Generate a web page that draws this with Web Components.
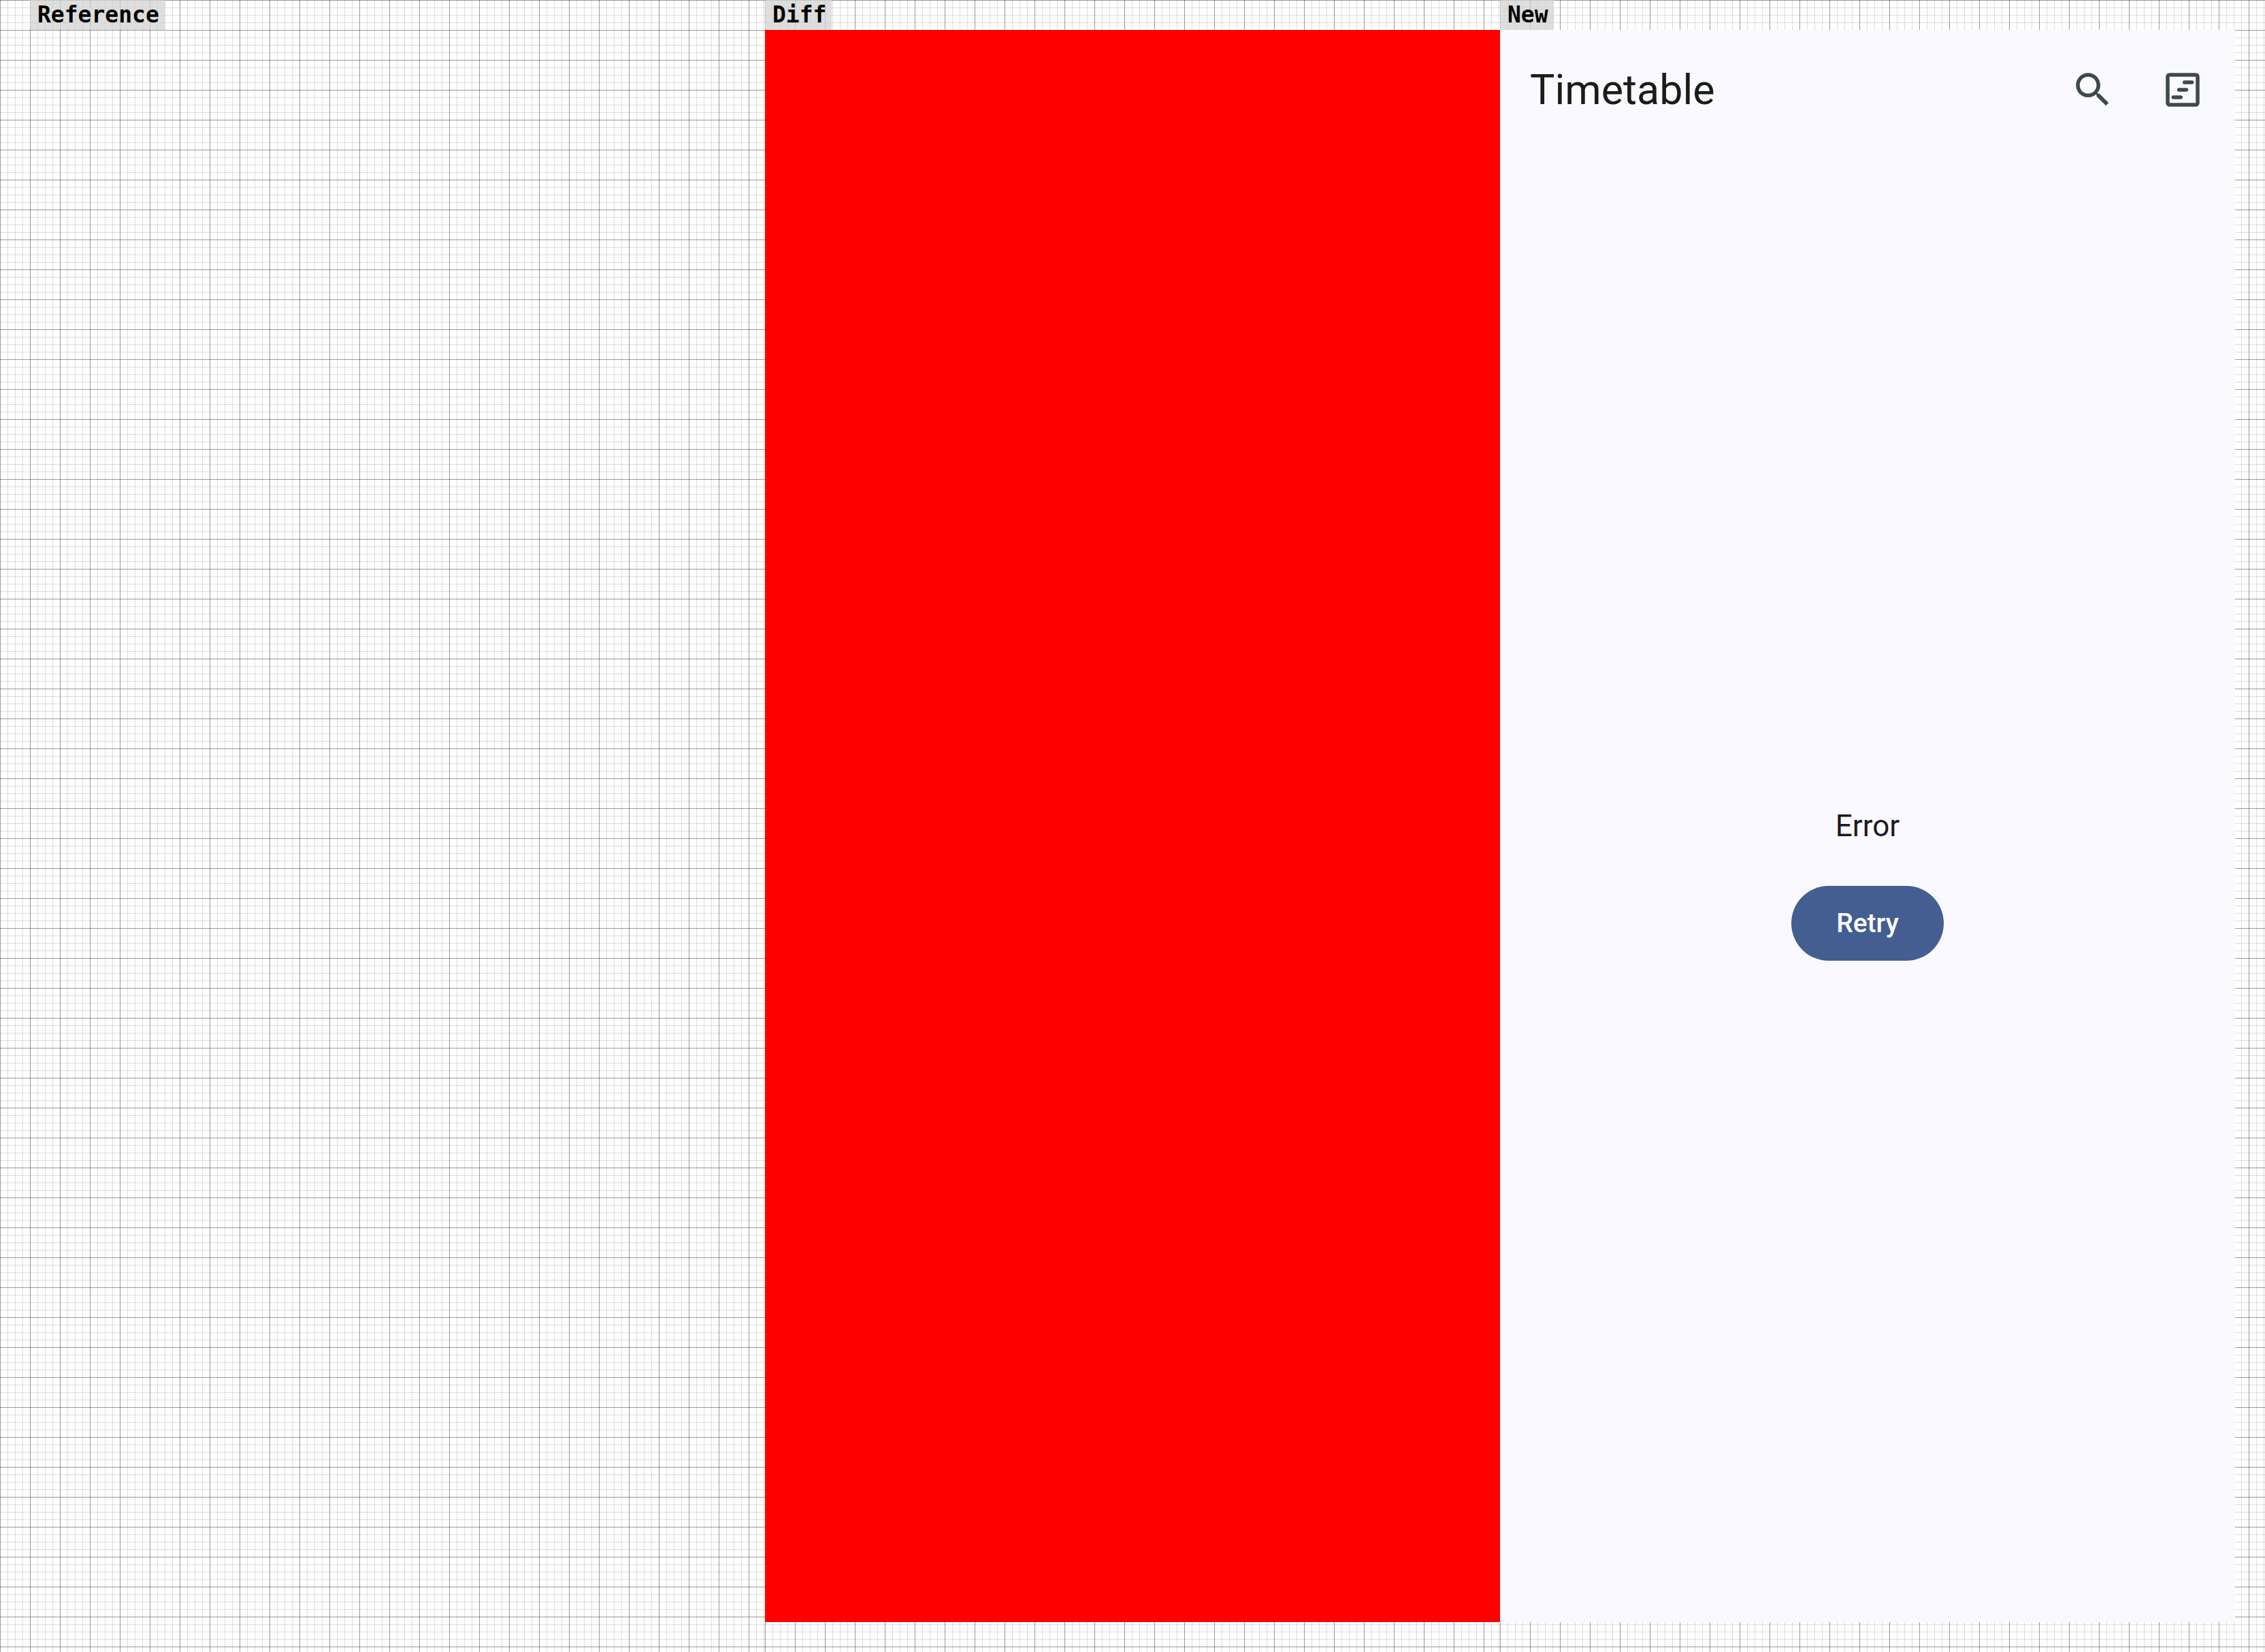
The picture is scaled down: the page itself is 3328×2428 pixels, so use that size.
<!DOCTYPE html>
<html lang="en">
<head>
<meta charset="utf-8">
<title>Screenshot comparison</title>
<style>
  html, body { margin: 0; background: #fff; }
</style>
</head>
<body>
<compare-board>
  <compare-panel label="Reference" class="first"></compare-panel>
  <compare-panel label="Diff" class="middle"><diff-fill></diff-fill></compare-panel>
  <compare-panel label="New" class="last">
    <timetable-screen>
      <app-bar slot="bar" heading="Timetable">
        <icon-button label="Search">
          <svg viewBox="0 0 24 24"><path d="M15.5 14h-.79l-.28-.27C15.41 12.59 16 11.11 16 9.5 16 5.91 13.09 3 9.5 3S3 5.91 3 9.5 5.91 16 9.5 16c1.61 0 3.09-.59 4.23-1.57l.27.28v.79l5 4.99L20.49 19l-4.99-5zm-6 0C7.01 14 5 11.99 5 9.5S7.01 5 9.5 5 14 7.01 14 9.5 11.99 14 9.5 14z"/></svg>
        </icon-button>
        <icon-button label="Switch timetable view">
          <svg viewBox="0 0 24 24"><path fill-rule="evenodd" d="M5 3h14a2 2 0 0 1 2 2v14a2 2 0 0 1-2 2H5a2 2 0 0 1-2-2V5a2 2 0 0 1 2-2zM5 5v14h14V5z"/><rect x="12" y="7" width="6" height="2" rx="1"/><rect x="9" y="11" width="6" height="2" rx="1"/><rect x="6" y="15" width="6" height="2" rx="1"/></svg>
        </icon-button>
      </app-bar>
      <error-message action="Retry">Error</error-message>
    </timetable-screen>
  </compare-panel>
</compare-board>
<script>
  class BaseElement extends HTMLElement {
    connectedCallback() {
      if (!this.shadowRoot) this.attachShadow({ mode: "open" }).innerHTML = this.render();
    }
  }

  customElements.define("compare-board", class extends BaseElement {
    render() {
      return `<style>
        :host { display: grid; min-height: 100vh; grid-template-columns: 44px 1fr 1fr 1fr 44px; }
        ::slotted(.first) { grid-column: 1 / 3; padding-left: 44px; }
        ::slotted(.middle) { grid-column: 3 / 4; }
        ::slotted(.last) { grid-column: 4 / 6; padding-right: 44px; }
      </style><slot></slot>`;
    }
  });

  customElements.define("compare-panel", class extends BaseElement {
    render() {
      return `<style>
        :host {
          display: flex; flex-direction: column; box-sizing: border-box; padding-bottom: 44px;
          background-color: #fff;
          background-image:
            linear-gradient(to right, rgba(0,0,0,.3) 1px, transparent 1px),
            linear-gradient(to bottom, rgba(0,0,0,.3) 1px, transparent 1px),
            linear-gradient(to right, rgba(0,0,0,.13) 1px, transparent 1px),
            linear-gradient(to bottom, rgba(0,0,0,.13) 1px, transparent 1px);
          background-size: 44px 44px, 44px 44px, 11px 11px, 11px 11px;
        }
        .label {
          align-self: flex-start; box-sizing: border-box; height: 44px; padding: 0 8px 0 11px;
          background: rgba(211,211,211,.75);
          font: bold 33px/44px "DejaVu Sans Mono", monospace; color: #000;
        }
        .body { flex: 1; display: flex; flex-direction: column; }
      </style>
      <div class="label">${this.getAttribute("label")}</div>
      <div class="body"><slot></slot></div>`;
    }
  });

  customElements.define("diff-fill", class extends BaseElement {
    render() {
      return `<style>:host { display: block; flex: 1; background: #f00; }</style>`;
    }
  });

  customElements.define("timetable-screen", class extends BaseElement {
    render() {
      return `<style>
        :host { display: flex; flex: 1; flex-direction: column; background: #faf9ff; font-family: Roboto, sans-serif; }
        main { flex: 1; display: flex; align-items: center; justify-content: center; }
      </style><slot name="bar"></slot><main><slot></slot></main>`;
    }
  });

  customElements.define("app-bar", class extends BaseElement {
    render() {
      return `<style>
        :host { display: block; }
        header { display: flex; align-items: center; height: 176px; box-sizing: border-box; padding: 0 11px 0 44px; }
        h1 { flex: 1; margin: 0; font-size: 61px; line-height: 77px; font-weight: 400; color: #191d17; }
      </style><header><h1>${this.getAttribute("heading")}</h1><slot></slot></header>`;
    }
  });

  customElements.define("icon-button", class extends BaseElement {
    render() {
      return `<style>
        :host { display: block; }
        button { display: flex; align-items: center; justify-content: center; width: 132px; height: 132px; padding: 0; border: 0; border-radius: 50%; background: none; }
        ::slotted(svg) { display: block; width: 66px; height: 66px; fill: #3f4948; }
      </style><button type="button" aria-label="${this.getAttribute("label")}"><slot></slot></button>`;
    }
  });

  customElements.define("error-message", class extends BaseElement {
    render() {
      return `<style>
        :host { display: flex; flex-direction: column; align-items: center; gap: 55px; padding-bottom: 11px; }
        p { margin: 0; font-size: 44px; line-height: 66px; color: #1a1b20; }
        button { height: 110px; padding: 0 66px; border: 0; border-radius: 55px; background: #445e91; color: #fff; font: 500 39px/55px Roboto, sans-serif; }
      </style><p><slot></slot></p><button type="button">${this.getAttribute("action")}</button>`;
    }
  });
</script>
</body>
</html>
